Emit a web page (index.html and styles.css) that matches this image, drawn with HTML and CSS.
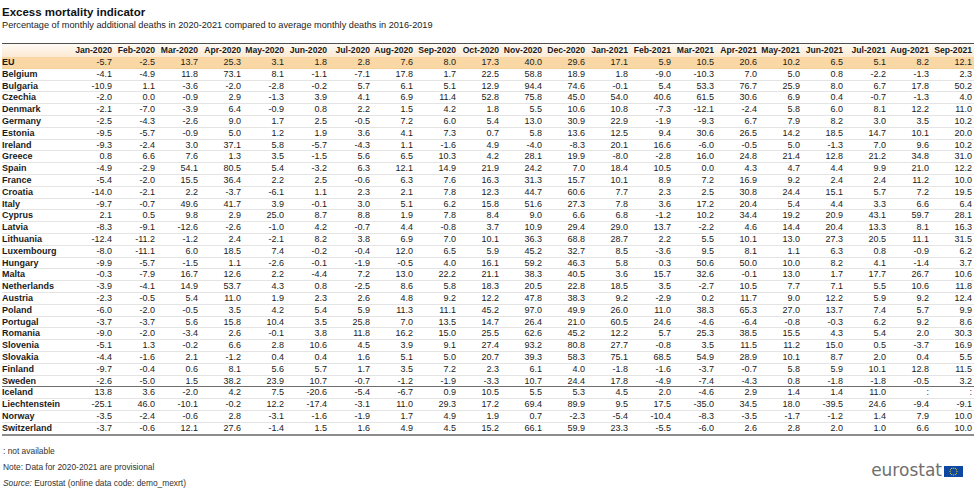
FILE: index.html
```html
<!DOCTYPE html>
<html lang="en">
<head>
<meta charset="utf-8">
<title>Excess mortality indicator</title>
<link rel="stylesheet" href="styles.css">
</head>
<body>
<div class="page">
  <h1 class="title">Excess mortality indicator</h1>
  <p class="subtitle">Percentage of monthly additional deaths in 2020-2021 compared to average monthly deaths in 2016-2019</p>
  <table class="data">
    <colgroup><col class="c-label"><col span="21" class="c-num"></colgroup>
    <thead>
      <tr class="head"><th></th><th>Jan-2020</th><th>Feb-2020</th><th>Mar-2020</th><th>Apr-2020</th><th>May-2020</th><th>Jun-2020</th><th>Jul-2020</th><th>Aug-2020</th><th>Sep-2020</th><th>Oct-2020</th><th>Nov-2020</th><th>Dec-2020</th><th>Jan-2021</th><th>Feb-2021</th><th>Mar-2021</th><th>Apr-2021</th><th>May-2021</th><th>Jun-2021</th><th>Jul-2021</th><th>Aug-2021</th><th>Sep-2021</th></tr>
    </thead>
    <tbody>
      <tr class="eu"><th>EU</th><td>-5.7</td><td>-2.5</td><td>13.7</td><td>25.3</td><td>3.1</td><td>1.8</td><td>2.8</td><td>7.6</td><td>8.0</td><td>17.3</td><td>40.0</td><td>29.6</td><td>17.1</td><td>5.9</td><td>10.5</td><td>20.6</td><td>10.2</td><td>6.5</td><td>5.1</td><td>8.2</td><td>12.1</td></tr>
      <tr><th>Belgium</th><td>-4.1</td><td>-4.9</td><td>11.8</td><td>73.1</td><td>8.1</td><td>-1.1</td><td>-7.1</td><td>17.8</td><td>1.7</td><td>22.5</td><td>58.8</td><td>18.9</td><td>1.8</td><td>-9.0</td><td>-10.3</td><td>7.0</td><td>5.0</td><td>0.8</td><td>-2.2</td><td>-1.3</td><td>2.3</td></tr>
      <tr><th>Bulgaria</th><td>-10.9</td><td>1.1</td><td>-3.6</td><td>-2.0</td><td>-2.8</td><td>-0.2</td><td>5.7</td><td>6.1</td><td>5.1</td><td>12.9</td><td>94.4</td><td>74.6</td><td>-0.1</td><td>5.4</td><td>53.3</td><td>76.7</td><td>25.9</td><td>8.0</td><td>6.7</td><td>17.8</td><td>50.2</td></tr>
      <tr><th>Czechia</th><td>-2.0</td><td>0.0</td><td>-0.9</td><td>2.9</td><td>-1.3</td><td>3.9</td><td>4.1</td><td>6.9</td><td>11.4</td><td>52.8</td><td>75.8</td><td>45.0</td><td>54.0</td><td>40.6</td><td>61.5</td><td>30.6</td><td>6.9</td><td>0.4</td><td>-0.7</td><td>-1.3</td><td>4.0</td></tr>
      <tr><th>Denmark</th><td>-2.1</td><td>-7.0</td><td>-3.9</td><td>6.4</td><td>-0.9</td><td>0.8</td><td>2.2</td><td>1.5</td><td>4.2</td><td>1.8</td><td>5.5</td><td>10.6</td><td>10.8</td><td>-7.3</td><td>-12.1</td><td>-2.4</td><td>5.8</td><td>6.0</td><td>8.1</td><td>12.2</td><td>11.0</td></tr>
      <tr><th>Germany</th><td>-2.5</td><td>-4.3</td><td>-2.6</td><td>9.0</td><td>1.7</td><td>2.5</td><td>-0.5</td><td>7.2</td><td>6.0</td><td>5.4</td><td>13.0</td><td>30.9</td><td>22.9</td><td>-1.9</td><td>-9.3</td><td>6.7</td><td>7.9</td><td>8.2</td><td>3.0</td><td>3.5</td><td>10.2</td></tr>
      <tr><th>Estonia</th><td>-9.5</td><td>-5.7</td><td>-0.9</td><td>5.0</td><td>1.2</td><td>1.9</td><td>3.6</td><td>4.1</td><td>7.3</td><td>0.7</td><td>5.8</td><td>13.6</td><td>12.5</td><td>9.4</td><td>30.6</td><td>26.5</td><td>14.2</td><td>18.5</td><td>14.7</td><td>10.1</td><td>20.0</td></tr>
      <tr><th>Ireland</th><td>-9.3</td><td>-2.4</td><td>3.0</td><td>37.1</td><td>5.8</td><td>-5.7</td><td>-4.3</td><td>1.1</td><td>-1.6</td><td>4.9</td><td>-4.0</td><td>-8.3</td><td>20.1</td><td>16.6</td><td>-6.0</td><td>-0.5</td><td>5.0</td><td>-1.3</td><td>7.0</td><td>9.6</td><td>10.2</td></tr>
      <tr><th>Greece</th><td>0.8</td><td>6.6</td><td>7.6</td><td>1.3</td><td>3.5</td><td>-1.5</td><td>5.6</td><td>6.5</td><td>10.3</td><td>4.2</td><td>28.1</td><td>19.9</td><td>-8.0</td><td>-2.8</td><td>16.0</td><td>24.8</td><td>21.4</td><td>12.8</td><td>21.2</td><td>34.8</td><td>31.0</td></tr>
      <tr><th>Spain</th><td>-4.9</td><td>-2.9</td><td>54.1</td><td>80.5</td><td>5.4</td><td>-3.2</td><td>6.3</td><td>12.1</td><td>14.9</td><td>21.9</td><td>24.2</td><td>7.0</td><td>18.4</td><td>10.5</td><td>0.0</td><td>4.3</td><td>4.7</td><td>4.4</td><td>9.9</td><td>21.0</td><td>12.2</td></tr>
      <tr><th>France</th><td>-5.4</td><td>-2.0</td><td>15.5</td><td>36.4</td><td>2.2</td><td>2.5</td><td>-0.6</td><td>6.3</td><td>7.6</td><td>16.3</td><td>31.3</td><td>15.7</td><td>10.1</td><td>8.9</td><td>7.2</td><td>16.9</td><td>9.2</td><td>2.4</td><td>2.4</td><td>11.2</td><td>10.0</td></tr>
      <tr><th>Croatia</th><td>-14.0</td><td>-2.1</td><td>2.2</td><td>-3.7</td><td>-6.1</td><td>1.1</td><td>2.3</td><td>2.1</td><td>7.8</td><td>12.3</td><td>44.7</td><td>60.6</td><td>7.7</td><td>2.3</td><td>2.5</td><td>30.8</td><td>24.4</td><td>15.1</td><td>5.7</td><td>7.2</td><td>19.5</td></tr>
      <tr><th>Italy</th><td>-9.7</td><td>-0.7</td><td>49.6</td><td>41.7</td><td>3.9</td><td>-0.1</td><td>3.0</td><td>5.1</td><td>6.2</td><td>15.8</td><td>51.6</td><td>27.3</td><td>7.8</td><td>3.6</td><td>17.2</td><td>20.4</td><td>5.4</td><td>4.4</td><td>3.3</td><td>6.6</td><td>6.4</td></tr>
      <tr><th>Cyprus</th><td>2.1</td><td>0.5</td><td>9.8</td><td>2.9</td><td>25.0</td><td>8.7</td><td>8.8</td><td>1.9</td><td>7.8</td><td>8.4</td><td>9.0</td><td>6.6</td><td>6.8</td><td>-1.2</td><td>10.2</td><td>34.4</td><td>19.2</td><td>20.9</td><td>43.1</td><td>59.7</td><td>28.1</td></tr>
      <tr><th>Latvia</th><td>-8.3</td><td>-9.1</td><td>-12.6</td><td>-2.6</td><td>-1.0</td><td>4.2</td><td>-0.7</td><td>4.4</td><td>-0.8</td><td>3.7</td><td>10.9</td><td>29.4</td><td>29.0</td><td>13.7</td><td>-2.2</td><td>4.6</td><td>14.4</td><td>20.4</td><td>13.3</td><td>8.1</td><td>16.3</td></tr>
      <tr><th>Lithuania</th><td>-12.4</td><td>-11.2</td><td>-1.2</td><td>2.4</td><td>-2.1</td><td>8.2</td><td>3.8</td><td>6.9</td><td>7.0</td><td>10.1</td><td>36.3</td><td>68.8</td><td>28.7</td><td>2.2</td><td>5.5</td><td>10.1</td><td>13.0</td><td>27.3</td><td>20.5</td><td>11.1</td><td>31.5</td></tr>
      <tr><th>Luxembourg</th><td>-8.0</td><td>-11.1</td><td>6.0</td><td>18.5</td><td>7.4</td><td>-0.2</td><td>-0.4</td><td>12.0</td><td>6.5</td><td>5.9</td><td>45.2</td><td>32.7</td><td>8.5</td><td>-3.6</td><td>9.5</td><td>8.1</td><td>1.1</td><td>6.3</td><td>0.8</td><td>-0.9</td><td>6.2</td></tr>
      <tr><th>Hungary</th><td>-9.9</td><td>-5.7</td><td>-1.5</td><td>1.1</td><td>-2.6</td><td>-0.1</td><td>-1.9</td><td>-0.5</td><td>4.0</td><td>16.1</td><td>59.2</td><td>46.3</td><td>5.8</td><td>0.3</td><td>50.6</td><td>50.0</td><td>10.0</td><td>8.2</td><td>4.1</td><td>-1.4</td><td>3.7</td></tr>
      <tr><th>Malta</th><td>-0.3</td><td>-7.9</td><td>16.7</td><td>12.6</td><td>2.2</td><td>-4.4</td><td>7.2</td><td>13.0</td><td>22.2</td><td>21.1</td><td>38.3</td><td>40.5</td><td>3.6</td><td>15.7</td><td>32.6</td><td>-0.1</td><td>13.0</td><td>1.7</td><td>17.7</td><td>26.7</td><td>10.6</td></tr>
      <tr><th>Netherlands</th><td>-3.9</td><td>-4.1</td><td>14.9</td><td>53.7</td><td>4.3</td><td>0.8</td><td>-2.5</td><td>8.6</td><td>5.8</td><td>18.3</td><td>20.5</td><td>22.8</td><td>18.5</td><td>3.5</td><td>-2.7</td><td>10.5</td><td>7.7</td><td>7.1</td><td>5.5</td><td>10.6</td><td>11.8</td></tr>
      <tr><th>Austria</th><td>-2.3</td><td>-0.5</td><td>5.4</td><td>11.0</td><td>1.9</td><td>2.3</td><td>2.6</td><td>4.8</td><td>9.2</td><td>12.2</td><td>47.8</td><td>38.3</td><td>9.2</td><td>-2.9</td><td>0.2</td><td>11.7</td><td>9.0</td><td>12.2</td><td>5.9</td><td>9.2</td><td>12.4</td></tr>
      <tr><th>Poland</th><td>-6.0</td><td>-2.0</td><td>-0.5</td><td>3.5</td><td>4.2</td><td>5.4</td><td>5.9</td><td>11.3</td><td>11.1</td><td>45.2</td><td>97.0</td><td>49.9</td><td>26.0</td><td>11.0</td><td>38.3</td><td>65.3</td><td>27.0</td><td>13.7</td><td>7.4</td><td>5.7</td><td>9.9</td></tr>
      <tr><th>Portugal</th><td>-3.7</td><td>-3.7</td><td>5.6</td><td>15.8</td><td>10.4</td><td>3.5</td><td>25.8</td><td>7.0</td><td>13.5</td><td>14.7</td><td>26.4</td><td>21.0</td><td>60.5</td><td>24.6</td><td>-4.6</td><td>-6.4</td><td>-0.8</td><td>-0.3</td><td>6.2</td><td>9.2</td><td>8.6</td></tr>
      <tr><th>Romania</th><td>-9.0</td><td>-2.0</td><td>-3.4</td><td>2.6</td><td>-0.1</td><td>3.8</td><td>11.8</td><td>16.2</td><td>15.0</td><td>25.5</td><td>62.6</td><td>45.2</td><td>12.2</td><td>5.7</td><td>25.3</td><td>38.5</td><td>15.5</td><td>4.3</td><td>5.4</td><td>2.0</td><td>30.3</td></tr>
      <tr><th>Slovenia</th><td>-5.1</td><td>1.3</td><td>-0.2</td><td>6.6</td><td>2.8</td><td>10.6</td><td>4.5</td><td>3.9</td><td>9.1</td><td>27.4</td><td>93.2</td><td>80.8</td><td>27.7</td><td>-0.8</td><td>3.5</td><td>11.5</td><td>11.2</td><td>15.0</td><td>0.5</td><td>-3.7</td><td>16.9</td></tr>
      <tr><th>Slovakia</th><td>-4.4</td><td>-1.6</td><td>2.1</td><td>-1.2</td><td>0.4</td><td>0.4</td><td>1.6</td><td>5.1</td><td>5.0</td><td>20.7</td><td>39.3</td><td>58.3</td><td>75.1</td><td>68.5</td><td>54.9</td><td>28.9</td><td>10.1</td><td>8.7</td><td>2.0</td><td>0.4</td><td>5.5</td></tr>
      <tr><th>Finland</th><td>-9.7</td><td>-0.4</td><td>0.6</td><td>8.1</td><td>5.6</td><td>5.7</td><td>1.7</td><td>3.5</td><td>7.2</td><td>2.3</td><td>6.1</td><td>4.0</td><td>-1.8</td><td>-1.6</td><td>-3.7</td><td>-0.7</td><td>5.8</td><td>5.9</td><td>10.1</td><td>12.8</td><td>11.5</td></tr>
      <tr class="group-end"><th>Sweden</th><td>-2.6</td><td>-5.0</td><td>1.5</td><td>38.2</td><td>23.9</td><td>10.7</td><td>-0.7</td><td>-1.2</td><td>-1.9</td><td>-3.3</td><td>10.7</td><td>24.4</td><td>17.8</td><td>-4.9</td><td>-7.4</td><td>-4.3</td><td>0.8</td><td>-1.8</td><td>-1.8</td><td>-0.5</td><td>3.2</td></tr>
      <tr><th>Iceland</th><td>13.8</td><td>3.6</td><td>-2.0</td><td>4.2</td><td>7.5</td><td>-20.6</td><td>-5.4</td><td>-6.7</td><td>0.9</td><td>10.5</td><td>5.5</td><td>5.3</td><td>4.5</td><td>2.0</td><td>-4.6</td><td>2.9</td><td>1.4</td><td>1.4</td><td>11.0</td><td>:</td><td>:</td></tr>
      <tr><th>Liechtenstein</th><td>-25.1</td><td>46.0</td><td>-10.1</td><td>-0.2</td><td>12.2</td><td>-17.4</td><td>-3.1</td><td>11.0</td><td>29.3</td><td>17.2</td><td>69.4</td><td>89.9</td><td>9.5</td><td>17.5</td><td>-35.0</td><td>34.5</td><td>18.0</td><td>-39.5</td><td>24.6</td><td>-9.4</td><td>-9.1</td></tr>
      <tr><th>Norway</th><td>-3.5</td><td>-2.4</td><td>-0.6</td><td>2.8</td><td>-3.1</td><td>-1.6</td><td>-1.9</td><td>1.7</td><td>4.9</td><td>1.9</td><td>0.7</td><td>-2.3</td><td>-5.4</td><td>-10.4</td><td>-8.3</td><td>-3.5</td><td>-1.7</td><td>-1.2</td><td>1.4</td><td>7.9</td><td>10.0</td></tr>
      <tr class="last"><th>Switzerland</th><td>-3.7</td><td>-0.6</td><td>12.1</td><td>27.6</td><td>-1.4</td><td>1.5</td><td>1.6</td><td>4.9</td><td>4.5</td><td>15.2</td><td>66.1</td><td>59.9</td><td>23.3</td><td>-5.5</td><td>-6.0</td><td>2.6</td><td>2.8</td><td>2.0</td><td>1.0</td><td>6.6</td><td>10.0</td></tr>
    </tbody>
  </table>
  <div class="footer">
    <div class="notes">
      <p>: not available</p>
      <p>Note: Data for 2020-2021 are provisional</p>
      <p><em>Source:</em> Eurostat (online data code: demo_mexrt)</p>
    </div>
    <div class="logo">
      <span class="logo-text">eurostat</span>
      <svg class="flag" viewBox="0 0 19 11" width="19" height="11" aria-hidden="true">
        <rect width="19" height="11" fill="#0e47a1"/>
        <g fill="#f5d800">
          <circle cx="9.5" cy="2" r="0.6"/>
          <circle cx="11.25" cy="2.47" r="0.6"/>
          <circle cx="12.53" cy="3.75" r="0.6"/>
          <circle cx="13" cy="5.5" r="0.6"/>
          <circle cx="12.53" cy="7.25" r="0.6"/>
          <circle cx="11.25" cy="8.53" r="0.6"/>
          <circle cx="9.5" cy="9" r="0.6"/>
          <circle cx="7.75" cy="8.53" r="0.6"/>
          <circle cx="6.47" cy="7.25" r="0.6"/>
          <circle cx="6" cy="5.5" r="0.6"/>
          <circle cx="6.47" cy="3.75" r="0.6"/>
          <circle cx="7.75" cy="2.47" r="0.6"/>
        </g>
      </svg>
    </div>
  </div>
</div>
</body>
</html>
```
FILE: styles.css
```css
html, body {
  margin: 0;
  padding: 0;
  background: #ffffff;
}

body {
  font-family: "Liberation Sans", Arial, sans-serif;
  color: #1b1b1b;
}

.page {
  width: 972px;
  padding: 6px 3px 0 2px;
}

.title {
  margin: 0;
  font-size: 11.5px;
  line-height: 13px;
  font-weight: bold;
  color: #111;
}

.subtitle {
  margin: 1px 0 0 0;
  font-size: 9.2px;
  line-height: 11px;
  color: #222;
}

.data {
  margin-top: 12px;
  width: 972px;
  table-layout: fixed;
  border-collapse: separate;
  border-spacing: 0;
}

.c-label { width: 69px; }
.c-num { width: 43px; }

.data th,
.data td {
  padding: 0 2px 0 0;
  white-space: nowrap;
  overflow: hidden;
}

.head th {
  font-size: 8.6px;
  font-weight: bold;
  line-height: 13px;
  text-align: right;
  border-top: 1px solid #505050;
  background: linear-gradient(to bottom, #fffbf5, #fce9d2);
  color: #1a1a1a;
}

tbody th {
  text-align: left;
  font-weight: bold;
  font-size: 9px;
  padding-left: 1px;
  line-height: 10.8px;
  border-bottom: 1px solid #e4e4e4;
}

tbody td {
  text-align: right;
  font-size: 9px;
  line-height: 10.8px;
  border-bottom: 1px solid #e4e4e4;
}

.eu th,
.eu td {
  background: #f9d8a6;
  border-bottom-color: #f3cf9a;
}

.group-end th,
.group-end td {
  border-bottom: 1px solid #6e6e6e;
}

.last th,
.last td {
  border-bottom: 2px solid #8c8c8c;
}

.footer {
  display: flex;
  justify-content: space-between;
  align-items: center;
  margin-top: 7px;
}

.notes {
  padding-left: 1px;
  font-size: 8.4px;
  line-height: 16px;
  color: #333;
}

.notes p {
  margin: 0;
}

.logo {
  display: flex;
  align-items: flex-end;
  gap: 2px;
  margin-right: 11px;
  padding-top: 6px;
}

.logo-text {
  font-family: "DejaVu Sans", sans-serif;
  font-size: 17px;
  line-height: 16px;
  color: #6f6f6f;
}

.flag {
  display: block;
  margin-bottom: 1px;
}
```
